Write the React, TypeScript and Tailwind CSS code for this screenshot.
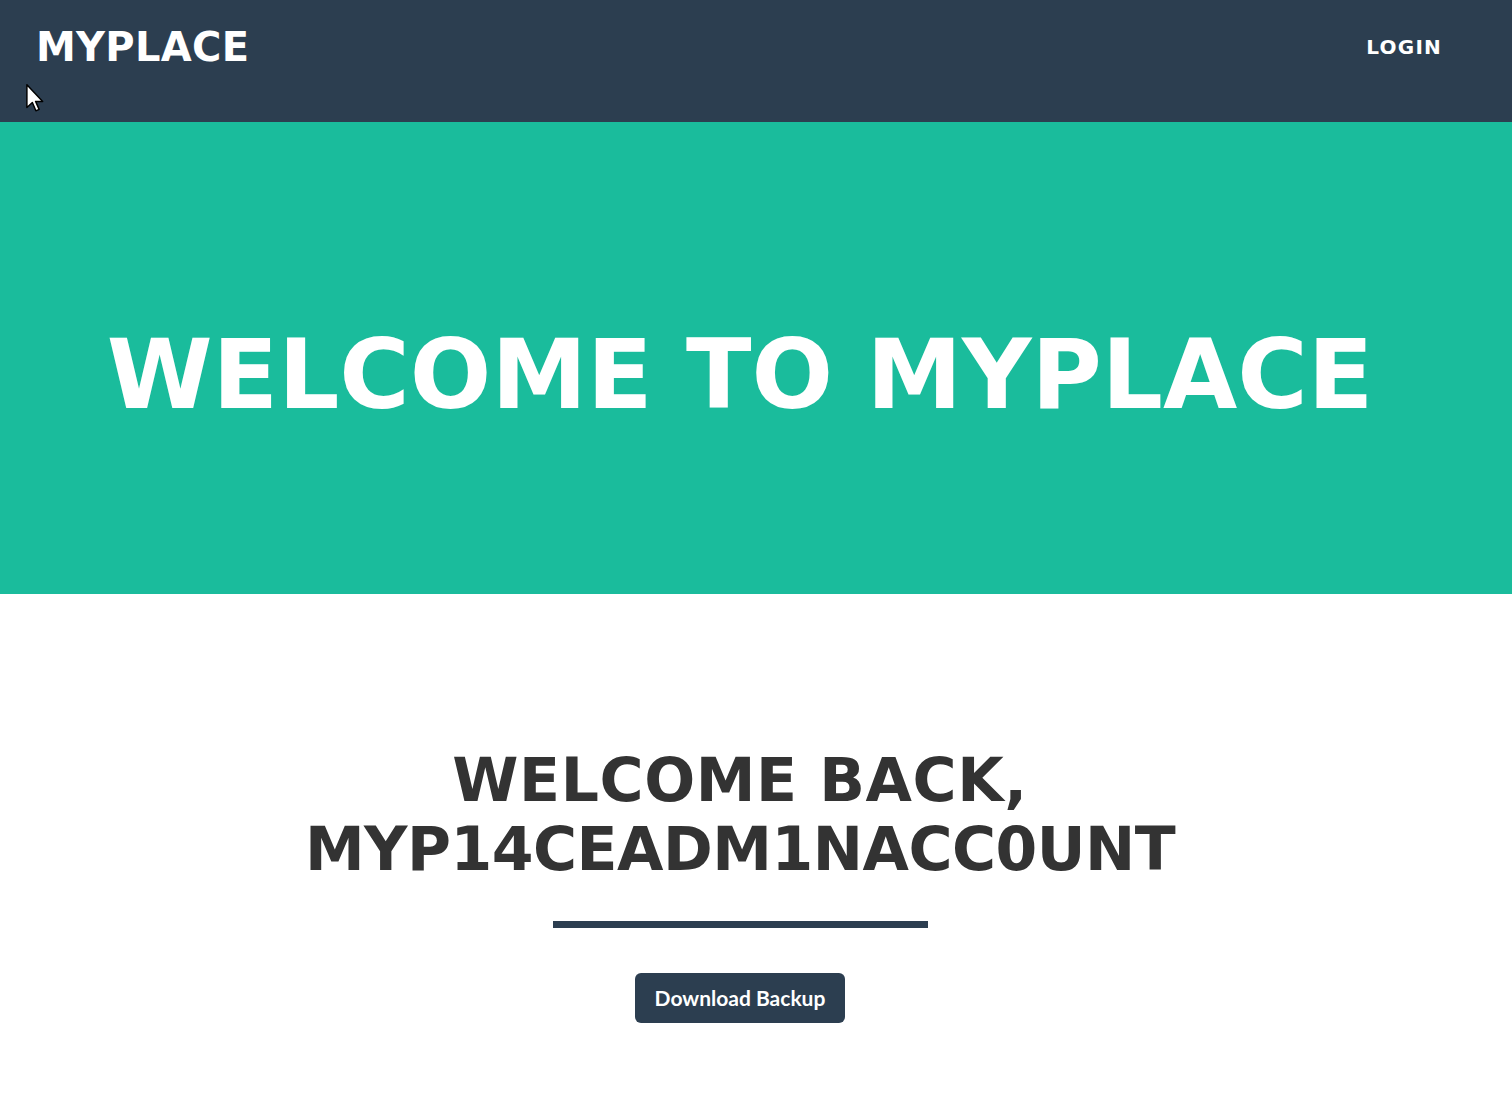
import React from "react";

function Cursor() {
  return (
    <svg
      className="absolute left-[26px] top-[84px]"
      width="18"
      height="28"
      viewBox="0 0 12 19"
      aria-hidden="true"
    >
      <path
        d="M0.5 0.5 L0.5 16 L4.2 12.6 L6.6 18.2 L8.8 17.2 L6.4 11.8 L11.2 11.8 Z"
        fill="#ffffff"
        stroke="#000000"
        strokeWidth="1"
        strokeLinejoin="round"
      />
    </svg>
  );
}

export default function App() {
  return (
    <div className="relative min-h-[1101px] bg-white font-['DejaVu_Sans',sans-serif]">
      <nav className="h-[122px] bg-[#2c3e50] pt-[27px] pl-[36px] pr-[70px]">
        <div className="flex h-[40px] items-center justify-between">
          <a className="text-[40px] font-bold leading-none tracking-[0.3px] text-white">MYPLACE</a>
          <a className="text-[20px] font-bold leading-none tracking-[1.2px] text-white">LOGIN</a>
        </div>
      </nav>

      <header className="flex justify-center bg-[#1abc9c] pt-[205px] pb-[171px] pr-[32px]">
        <h1 className="whitespace-nowrap text-[96px] font-bold leading-none text-white">
          WELCOME TO MYPLACE
        </h1>
      </header>

      <section className="flex flex-col items-center pt-[152px] pb-[78px] pr-[32px]">
        <h2 className="flex flex-col items-center text-center text-[60px] font-bold leading-[69px] text-[#333333]">
          <span className="tracking-[0.6px]">WELCOME BACK,</span>
          <span className="tracking-[-0.5px]">MYP14CEADM1NACC0UNT</span>
        </h2>
        <div className="mt-[37px] h-[7px] w-[375px] bg-[#2c3e50]" />
        <button className="mt-[45px] flex h-[50px] w-[210px] items-center justify-center rounded-[6px] bg-[#2c3e50] font-['Lato',sans-serif] text-[21px] font-bold text-white">
          Download Backup
        </button>
      </section>

      <Cursor />
    </div>
  );
}
